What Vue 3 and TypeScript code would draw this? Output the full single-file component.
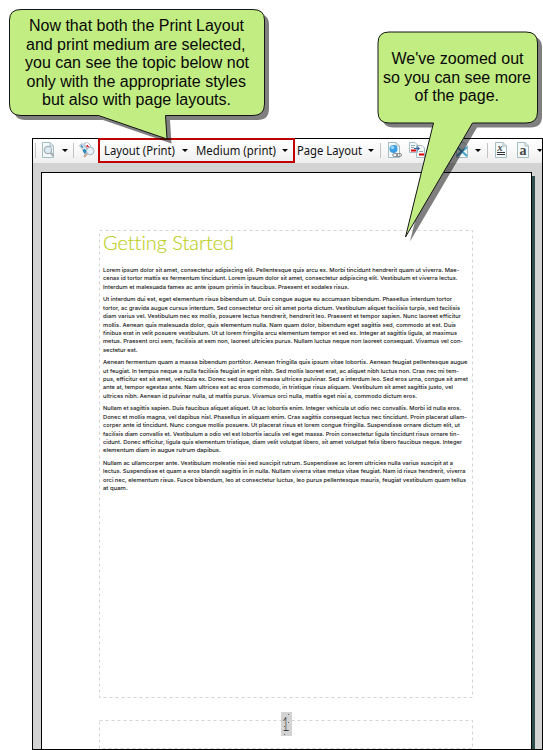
<script setup lang="ts">
interface Line { text: string; width: number; x?: number; y?: number }

const paragraphs: Line[][] = [
  [
    { text: 'Lorem ipsum dolor sit amet, consectetur adipiscing elit. Pellentesque quis arcu ex. Morbi tincidunt hendrerit quam ut viverra. Mae-', width: 356.3 },
    { text: 'cenas id tortor mattis ex fermentum tincidunt. Lorem ipsum dolor sit amet, consectetur adipiscing elit. Vestibulum et viverra lectus.', width: 354.5 },
    { text: 'Interdum et malesuada fames ac ante ipsum primis in faucibus. Praesent et sodales risus.', width: 246 },
  ],
  [
    { text: 'Ut interdum dui est, eget elementum risus bibendum ut. Duis congue augue eu accumsan bibendum. Phasellus interdum tortor', width: 349 },
    { text: 'tortor, ac gravida augue cursus interdum. Sed consectetur orci sit amet porta dictum. Vestibulum aliquet facilisis turpis, sed facilisis', width: 357 },
    { text: 'diam varius vel. Vestibulum nec ex mollis, posuere lectus hendrerit, hendrerit leo. Praesent et tempor sapien. Nunc laoreet efficitur', width: 358 },
    { text: 'mollis. Aenean quis malesuada dolor, quis elementum nulla. Nam quam dolor, bibendum eget sagittis sed, commodo at est. Duis', width: 353 },
    { text: 'finibus erat in velit posuere vestibulum. Ut ut lorem fringilla arcu elementum tempor et sed ex. Integer at sagittis ligula, at maximus', width: 354 },
    { text: 'metus. Praesent orci sem, facilisis at sem non, laoreet ultricies purus. Nullam luctus neque non laoreet consequat. Vivamus vel con-', width: 360 },
    { text: 'sectetur est.', width: 34.5 },
  ],
  [
    { text: 'Aenean fermentum quam a massa bibendum porttitor. Aenean fringilla quis ipsum vitae lobortis. Aenean feugiat pellentesque augue', width: 364.5 },
    { text: 'ut feugiat. In tempus neque a nulla facilisis feugiat in eget nibh. Sed mollis laoreet erat, ac aliquet nibh luctus non. Cras nec mi tem-', width: 356 },
    { text: 'pus, efficitur est sit amet, vehicula ex. Donec sed quam id massa ultrices pulvinar. Sed a interdum leo. Sed eros urna, congue sit amet', width: 365 },
    { text: 'ante at, tempor egestas ante. Nam ultrices est ac eros commodo, in tristique risus aliquam. Vestibulum sit amet sagittis justo, vel', width: 350 },
    { text: 'ultrices nibh. Aenean id pulvinar nulla, ut mattis purus. Vivamus orci nulla, mattis eget nisi a, commodo dictum eros.', width: 314 },
  ],
  [
    { text: 'Nullam et sagittis sapien. Duis faucibus aliquet aliquet. Ut ac lobortis enim. Integer vehicula ut odio nec convallis. Morbi id nulla eros.', width: 358 },
    { text: 'Donec et mollis magna, vel dapibus nisl. Phasellus in aliquam enim. Cras sagittis consequat lectus nec tincidunt. Proin placerat ullam-', width: 364 },
    { text: 'corper ante id tincidunt. Nunc congue mollis posuere. Ut placerat risus et lorem congue fringilla. Suspendisse ornare dictum elit, ut', width: 357 },
    { text: 'facilisis diam convallis et. Vestibulum a odio vel est lobortis iaculis vel eget massa. Proin consectetur ligula tincidunt risus ornare tin-', width: 356 },
    { text: 'cidunt. Donec efficitur, ligula quis elementum tristique, diam velit volutpat libero, sit amet volutpat felis libero faucibus neque. Integer', width: 359 },
    { text: 'elementum diam in augue rutrum dapibus.', width: 117.7 },
  ],
  [
    { text: 'Nullam ac ullamcorper ante. Vestibulum molestie nisi sed suscipit rutrum. Suspendisse ac lorem ultricies nulla varius suscipit at a', width: 350 },
    { text: 'lectus. Suspendisse et quam a eros blandit sagittis in in nulla. Nullam viverra vitae metus vitae feugiat. Nam id risus hendrerit, viverra', width: 362.5 },
    { text: 'orci nec, elementum risus. Fusce bibendum, leo at consectetur luctus, leo purus pellentesque mauris, feugiat vestibulum quam tellus', width: 363 },
    { text: 'at quam.', width: 24.7 },
  ],
]

const callouts: { box: string; lines: Line[] }[] = [
  {
    box: 'M21 9.5H253Q264.500 9.500 264.500 20V104Q264.500 115.500 253 115.500H165.500L167 139L98.500 115.500H21Q9.500 115.500 9.500 104V20Q9.500 9.500 21 9.500Z',
    lines: [
      { text: 'Now that both the Print Layout', x: 29, y: 31, width: 215 },
      { text: 'and print medium are selected,', x: 26, y: 49.5, width: 219.5 },
      { text: 'you can see the topic below not', x: 25, y: 68, width: 224 },
      { text: 'only with the appropriate styles', x: 26.500, y: 86.500, width: 219.500 },
      { text: 'but also with page layouts.', x: 42, y: 105, width: 189 },
    ],
  },
  {
    box: 'M389 32H526Q537.500 32 537.500 43V112Q537.500 123 526 123H472.500L405.500 237L433.500 123H389Q378 123 378 112V43Q378 32 389 32Z',
    lines: [
      { text: "We've zoomed out", x: 391.500, y: 64, width: 132 },
      { text: 'so you can see more', x: 383, y: 82.500, width: 148 },
      { text: 'of the page.', x: 414.500, y: 101, width: 84.500 },
    ],
  },
]
</script>

<template>
  <main class="screen">
    <section class="window">
      <div class="toolbar">
        <i class="sep s1"></i>
        <svg class="icon i1" viewBox="0 0 16 16">
          <path class="doc" d="M1.500 .5H9L12.500 4V15.500H1.500Z" /><path class="fold" d="M9 .5V4H12.500" />
          <path d="M9.500 10.500L12.500 14" stroke="#a8aeb2" stroke-width="2.200" />
          <circle cx="7" cy="8" r="3.700" fill="#dceaf2" stroke="#a5b1b8" stroke-width="1.200" />
        </svg>
        <i class="caret c1"></i>
        <i class="sep s2"></i>
        <svg class="icon i2" viewBox="0 0 16 16">
          <path d="M.5 3.500L3 1.500L9.500 8.500L7 11.500Z" fill="#e4eff5" stroke="#8ea2ad" stroke-width=".8" />
          <path d="M5 1.500L8.500 .5L12 4L8.500 7Z" fill="#fff" stroke="#9eafb8" stroke-width=".8" />
          <path d="M3.500 8.500L5.500 6.500L8 9.500L5.500 12Z" fill="#2887be" />
          <path d="M7.500 3H9V4H10V5.500H8.500V5H7.500Z" fill="#e1242c" />
          <path d="M2 3.500L4 5.500" stroke="#2887be" stroke-width="1.200" />
          <path d="M8 11.500L5 15" stroke="#c3a595" stroke-width="2" />
          <circle cx="11.300" cy="9" r="3.800" fill="#e4f1f8" stroke="#a7b5bf" />
        </svg>
        <div class="selection">
          <svg class="label l1" width="74" height="20"><text x="0" y="14.500" textLength="71" lengthAdjust="spacingAndGlyphs">Layout (Print)</text></svg>
          <i class="caret c2"></i>
          <svg class="label l2" width="84" height="20"><text x="0" y="14.500" textLength="80" lengthAdjust="spacingAndGlyphs">Medium (print)</text></svg>
          <i class="caret c3"></i>
        </div>
        <svg class="label l3" width="68" height="20"><text x="0" y="14.500" textLength="65" lengthAdjust="spacingAndGlyphs">Page Layout</text></svg>
        <i class="caret c4"></i>
        <i class="sep s3"></i>
        <svg class="icon i3" viewBox="0 0 16 16">
          <path class="doc" d="M1.500 .5H9L12.500 4V15.500H1.500Z" /><path class="fold" d="M9 .5V4H12.500" />
          <circle cx="6.500" cy="7" r="4" fill="#3b9de4" /><circle cx="5.500" cy="5.500" r="1.800" fill="#9cd7ff" />
          <g fill="none" stroke="#8a8a8a"><rect x="5.700" y="11.500" width="5" height="3" rx="1.500" /><rect x="9.500" y="11.500" width="5" height="3" rx="1.500" /></g>
        </svg>
        <svg class="icon i4" viewBox="0 0 16 16">
          <path class="doc" d="M.5 .5H6L8.500 3V10.500H.5ZM7.500 3.500H13L15.500 6V15.500H7.500Z" />
          <path d="M2 3.500H6M2 5.500H5M10 9.500H14" stroke="#91a9b0" />
          <path d="M2 8.500H7M10 12.500H15" stroke="#e00000" stroke-width="2" /><path d="M5 6.500H10M8 4.500L10.500 6.500L8 8.500" fill="none" stroke="#255da6" />
        </svg>
        <svg class="icon i5" viewBox="0 0 16 16">
          <path class="doc" d="M1.500 .5H9L12.500 4V15.500H1.500Z" />
          <path d="M2 5L12 14M12 5L2 14" stroke="#4aa5cd" stroke-width="2.300" />
        </svg>
        <i class="caret c5"></i>
        <i class="sep s4"></i>
        <svg class="icon i6" viewBox="0 0 16 16">
          <path class="doc" d="M.5 .5H8L11.500 4V15.500H.5Z" /><path class="fold" d="M8 .5V4H11.500" />
          <text class="glyph italic" x="2.500" y="8.500">x</text><path d="M2 10.500H10M2 12.500H10" stroke="#333" />
        </svg>
        <svg class="icon i7" viewBox="0 0 16 16">
          <path class="doc" d="M.5 .5H8L11.500 4V15.500H.5Z" /><path class="fold" d="M8 .5V4H11.500" />
          <text class="glyph big" x="2.500" y="12.500">a</text>
        </svg>
        <i class="caret c6"></i>
      </div>

      <div class="canvas">
        <article class="page">
          <div class="frame">
            <svg class="outline" width="374" height="468"><rect x=".5" y=".5" width="373" height="467" /></svg>
            <svg class="title" width="140" height="30"><text x="0" y="20" textLength="131" lengthAdjust="spacingAndGlyphs">Getting Started</text></svg>
            <div v-for="(lines, p) in paragraphs" :key="p" class="paragraph">
              <svg v-for="line in lines" :key="line.text" class="line" width="369" height="8.43">
                <text x="0" y="6" :textLength="line.width" lengthAdjust="spacingAndGlyphs">{{ line.text }}</text>
              </svg>
            </div>
          </div>
          <footer class="footer">
            <svg class="outline" width="374" height="29"><rect x=".5" y=".5" width="373" height="28" /></svg>
            <span class="number">
              <svg width="11" height="24">
                <text x="1" y="19" textLength="7" lengthAdjust="spacingAndGlyphs">1</text>
                <path d="M7 2h1v1H7zM7 10h1v1H7zM7 18h1v1H7zM3 14h1v1H3zM3 22h1v1H3z" fill="#666" />
              </svg>
            </span>
          </footer>
        </article>
        <div class="page-shadow"></div>
      </div>
    </section>

    <svg class="callouts" width="543" height="750">
      <g v-for="callout in callouts" :key="callout.box">
        <path class="shade" :d="callout.box" transform="translate(4.5 4.5)" />
        <path class="bubble" :d="callout.box" />
        <text v-for="line in callout.lines" :key="line.text" :x="line.x" :y="line.y" :textLength="line.width">{{ line.text }}</text>
      </g>
    </svg>
  </main>
</template>

<style>
body { margin: 0; background: #fff; overflow: hidden; }
</style>

<style scoped>
.screen { position: relative; width: 543px; height: 750px; box-sizing: border-box; padding: 138px 0 0 32px; overflow: hidden; background: #fff; }
.window { width: 511px; height: 612px; box-sizing: border-box; border: 1px solid #000; display: flex; flex-direction: column; }
.toolbar { display: flex; flex: none; height: 24px; background: linear-gradient(#fff, #f8f8f8 50%, #eee); }
svg { display: block; flex: none; }
.sep { flex: none; width: 1px; height: 15px; margin-top: 4px; background: #c3c3c3; }
.icon { width: 16px; height: 16px; margin-top: 3px; }
.doc { fill: #f3f8fa; stroke: #a5bcc1; }
.fold { fill: none; stroke: #a5bcc1; }
.caret { flex: none; width: 0; height: 0; margin-top: 10px; border: 3px solid transparent; border-top-color: #000; border-bottom: 0; }
.label { margin-top: 1px; overflow: visible; }
.label text { font: 12px "Noto Sans", sans-serif; fill: #111; }
.s1 { margin-left: 2px; }
.i1 { margin-left: 5px; }
.c1 { margin-left: 5px; }
.s2 { margin-left: 5px; }
.i2 { margin-left: 5px; }
.selection { display: flex; flex: none; box-sizing: border-box; width: 197px; height: 25px; margin: -1px 0 0 3px; border: 2px solid #c00000; }
.selection .label { margin-top: 0; }
.selection .caret { margin-top: 9px; }
.l1 { margin-left: 4px; }
.c2 { margin-left: 4px; }
.l2 { margin-left: 8px; }
.c3 { margin-left: 2px; }
.l3 { margin-left: 2px; }
.c4 { margin-left: 3px; }
.s3 { margin-left: 6px; }
.i3 { margin-left: 6px; }
.i4 { margin-left: 6px; }
.i5 { margin-left: 30px; }
.c5 { margin-left: 4px; }
.s4 { margin-left: 6px; }
.i6 { margin-left: 7px; }
.i7 { margin-left: 6px; }
.c6 { margin-left: 4px; border-right-width: 2px; }
.glyph { font: bold 10px "Liberation Serif", serif; fill: #444; }
.italic { font-style: italic; }
.big { font-size: 14px; }
.canvas { flex: 1; min-height: 0; display: flex; padding: 9px 0 0 8px; background: #d3d3d3; }
.page { width: 491px; box-sizing: border-box; border: 1px solid #000; border-bottom: 0; background: #fff; }
.page-shadow { width: 3px; margin-top: 4px; background: #2f4f4f; }
.frame { position: relative; width: 374px; height: 468px; margin: 57px 0 0 57px; }
.outline { position: absolute; left: 0; top: 0; }
.outline rect { fill: none; stroke: #d3d3d3; stroke-dasharray: 3 3; }
.title { margin-left: 4px; }
.title text { font: 300 19px Lato, sans-serif; font-variant-ligatures: none; fill: #bccf20; stroke: #bccf20; stroke-width: .15px; }
.paragraph { margin: 0 0 4px 4px; }
.title + .paragraph { padding-top: 6px; }
.line { overflow: visible; }
.line text { font: 500 5.2px Inter, sans-serif; fill: #111; }
.footer { position: relative; display: flex; width: 374px; height: 29px; margin: 22px 0 0 57px; }
.number { position: absolute; left: 182px; top: -8px; width: 11px; height: 24px; background: #d3d3d3; }
.number text { font: 300 19px Lato, sans-serif; fill: #222; }
.callouts { position: absolute; left: 0; top: 0; }
.callouts text { font: 16px "Liberation Sans", Arial, sans-serif; fill: #080808; }
.shade { fill: #000; fill-opacity: .5; }
.bubble { fill: #c2ed82; stroke: #151515; }
</style>
